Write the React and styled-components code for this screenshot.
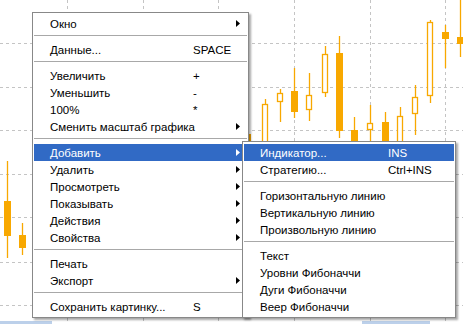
import React from "react";
import styled, { createGlobalStyle } from "styled-components";

const GlobalStyle = createGlobalStyle`
  html, body {
    margin: 0;
    padding: 0;
    background: #fff;
  }
  body {
    font-family: "Liberation Sans", Arial, sans-serif;
  }
`;

const ORANGE = "#f8a800";

// [x, width, wickTop, wickBottom, bodyTop, bodyBottom, filled]
const candles = [
  [4, 7, 161, 258, 201, 236, true],
  [19, 7, 223, 255, 235, 248, true],
  [244, 7, 128, 210, 134, 200, true],
  [262, 6, 99, 180, 104, 170, false],
  [277, 6, 89, 122, 93, 102, false],
  [291, 7, 68, 118, 91, 112, true],
  [306, 6, 73, 121, 95, 110, false],
  [322, 6, 46, 97, 54, 93, false],
  [336, 7, 36, 138, 53, 131, true],
  [351, 7, 117, 170, 130, 160, true],
  [367, 6, 105, 160, 123, 130, false],
  [382, 7, 112, 170, 122, 160, true],
  [397, 6, 107, 170, 116, 160, false],
  [412, 6, 85, 135, 97, 114, false],
  [427, 6, 20, 103, 22, 96, false],
  [442, 7, 25, 68, 32, 39, true],
  [457, 7, 0, 57, 37, 44, true],
];

const gridX = [67, 143, 218, 294, 370, 445];
const gridY = [43, 86.5, 130, 173.5, 217, 262, 305];

const mainItems = [
  { label: "Окно", arrow: true },
  { sep: true },
  { label: "Данные...", key: "SPACE" },
  { sep: true },
  { label: "Увеличить", key: "+" },
  { label: "Уменьшить", key: "-" },
  { label: "100%", key: "*" },
  { label: "Сменить масштаб графика", arrow: true },
  { sep: true },
  { label: "Добавить", arrow: true, active: true },
  { label: "Удалить", arrow: true },
  { label: "Просмотреть", arrow: true },
  { label: "Показывать", arrow: true },
  { label: "Действия", arrow: true },
  { label: "Свойства", arrow: true },
  { sep: true },
  { label: "Печать" },
  { label: "Экспорт", arrow: true },
  { sep: true },
  { label: "Сохранить картинку...", key: "S" },
];

const subItems = [
  { label: "Индикатор...", key: "INS", active: true },
  { label: "Стратегию...", key: "Ctrl+INS" },
  { sep: true },
  { label: "Горизонтальную линию" },
  { label: "Вертикальную линию" },
  { label: "Произвольную линию" },
  { sep: true },
  { label: "Текст" },
  { label: "Уровни Фибоначчи" },
  { label: "Дуги Фибоначчи" },
  { label: "Веер Фибоначчи" },
];

const Chart = () => (
  <ChartSvg width="463" height="324" viewBox="0 0 463 324">
    <rect width="463" height="324" fill="#fff" />
    {gridX.map((x) => (
      <line key={"x" + x} x1={x + 0.5} y1="0" x2={x + 0.5} y2="324" stroke="#c4c4c4" strokeDasharray="3 3" />
    ))}
    {gridY.map((y) => (
      <line key={"y" + y} x1="0" y1={Math.round(y) + 0.5} x2="463" y2={Math.round(y) + 0.5} stroke="#c4c4c4" strokeDasharray="3 3" />
    ))}
    {candles.map(([x, w, wt, wb, bt, bb, filled], i) => {
      const cx = x + Math.floor(w / 2) + 0.5;
      return (
        <g key={i}>
          <line x1={cx} y1={wt} x2={cx} y2={wb} stroke={ORANGE} strokeWidth="1.3" />
          {filled ? (
            <rect x={x} y={bt} width={w} height={bb - bt} fill={ORANGE} />
          ) : (
            <rect x={x + 0.5} y={bt + 0.5} width={w - 1} height={bb - bt - 1} fill="#fff" stroke={ORANGE} strokeWidth="1.3" />
          )}
        </g>
      );
    })}
    <rect x="0" y="321" width="52" height="3" fill="#bcd0ea" />
    <rect x="362" y="321" width="68" height="3" fill="#bcd0ea" />
  </ChartSvg>
);

const Arrow = ({ color }) => (
  <svg width="4" height="7" viewBox="0 0 4 7">
    <polygon points="0,0 4,3.5 0,7" fill={color} />
  </svg>
);

const MenuList = ({ items, labelWidth, left, top, width }) => (
  <Menu $left={left} $top={top} $width={width}>
    {items.map((it, i) =>
      it.sep ? (
        <Separator key={i} />
      ) : (
        <Item key={i} $active={it.active}>
          <Label $w={labelWidth}>{it.label}</Label>
          <Shortcut>{it.key}</Shortcut>
          {it.arrow && <Arrow color={it.active ? "#fff" : "#000"} />}
        </Item>
      )
    )}
  </Menu>
);

const App = () => (
  <>
    <GlobalStyle />
    <Stage>
      <Chart />
      <MenuList items={mainItems} labelWidth={143} left={32} top={12} width={217} />
      <MenuList items={subItems} labelWidth={128} left={242} top={141} width={214} />
    </Stage>
  </>
);

export default App;

const Stage = styled.div`
  position: relative;
  width: 463px;
  height: 324px;
  overflow: hidden;
  background: #fff;
`;

const ChartSvg = styled.svg`
  display: block;
`;

const Menu = styled.div`
  position: absolute;
  left: ${({ $left }) => $left}px;
  top: ${({ $top }) => $top}px;
  width: ${({ $width }) => $width}px;
  box-sizing: border-box;
  background: #fff;
  border: 1px solid #888;
  padding: 2px 1px;
  box-shadow: 2px 2px 2px rgba(0, 0, 0, 0.35);
  font-size: 11.5px;
  color: #000;
`;

const Item = styled.div`
  display: flex;
  align-items: center;
  height: 17px;
  padding: 0 7px 0 16px;
  white-space: nowrap;
  color: ${({ $active }) => ($active ? "#fff" : "#000")};
  background: ${({ $active }) => ($active ? "#316ac5" : "transparent")};
`;

const Label = styled.span`
  flex: none;
  width: ${({ $w }) => $w}px;
`;

const Shortcut = styled.span`
  flex: 1;
`;

const Separator = styled.div`
  height: 1px;
  margin: 3px 0 5px;
  background: #a8a8a8;
`;
